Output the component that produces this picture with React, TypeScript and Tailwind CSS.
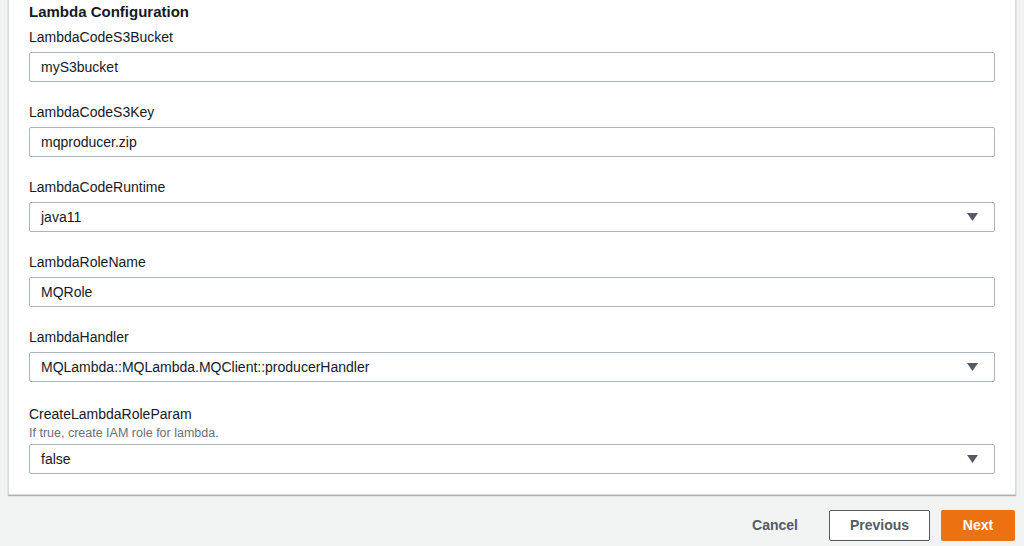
import React from 'react';

type Field = {
  label: string;
  value: string;
  select?: boolean;
  hint?: string;
};

const fields: Field[] = [
  { label: 'LambdaCodeS3Bucket', value: 'myS3bucket' },
  { label: 'LambdaCodeS3Key', value: 'mqproducer.zip' },
  { label: 'LambdaCodeRuntime', value: 'java11', select: true },
  { label: 'LambdaRoleName', value: 'MQRole' },
  { label: 'LambdaHandler', value: 'MQLambda::MQLambda.MQClient::producerHandler', select: true },
  { label: 'CreateLambdaRoleParam', value: 'false', select: true, hint: 'If true, create IAM role for lambda.' },
];

const Caret = () => (
  <svg width="11" height="8" viewBox="0 0 11 8" className="text-[#545b64]">
    <path d="M0 0H11L5.5 8Z" fill="currentColor" />
  </svg>
);

export default function App() {
  return (
    <div
      className="w-[1024px] h-[546px] overflow-hidden bg-[#f2f3f3] text-[#16191f]"
      style={{ fontFamily: '"Liberation Sans", Arial, sans-serif' }}
    >
      {/* Card */}
      <div className="mx-2 -mt-1 bg-white border-x border-b border-[#d5dbdb] shadow-[0_1px_1px_0_rgba(0,28,36,0.3)] pt-[5px] px-5 pb-5">
        <h2 className="text-[15px] font-bold leading-[22px]">Lambda Configuration</h2>
        <div className="flex flex-col gap-5 mt-[4px]">
          {fields.map((f) => (
            <div key={f.label} className="flex flex-col">
              <label className={`text-[14px] leading-[20px] ${f.hint ? 'mt-[2px]' : ''}`}>{f.label}</label>
              {f.hint && <p className="text-[12.5px] leading-[18px] text-[#687078]">{f.hint}</p>}
              <div
                className={`flex items-center justify-between h-[30px] border border-[#aab7b8] rounded-[2px] pl-[11px] pr-4 text-[14px] ${
                  f.hint ? 'mt-[2px]' : 'mt-[5px]'
                }`}
              >
                <span>{f.value}</span>
                {f.select && <Caret />}
              </div>
            </div>
          ))}
        </div>
      </div>

      {/* Footer actions */}
      <div className="flex items-center justify-end gap-[11px] pr-[9px] mt-[15px]">
        <button className="px-5 h-[31px] text-[14px] font-bold text-[#545b64]">Cancel</button>
        <button className="w-[101px] h-[31px] border border-[#545b64] rounded-[2px] bg-white text-[14px] font-bold text-[#545b64]">
          Previous
        </button>
        <button className="w-[74px] h-[31px] rounded-[2px] bg-[#ec7211] text-[14px] font-bold text-white">
          Next
        </button>
      </div>
    </div>
  );
}
